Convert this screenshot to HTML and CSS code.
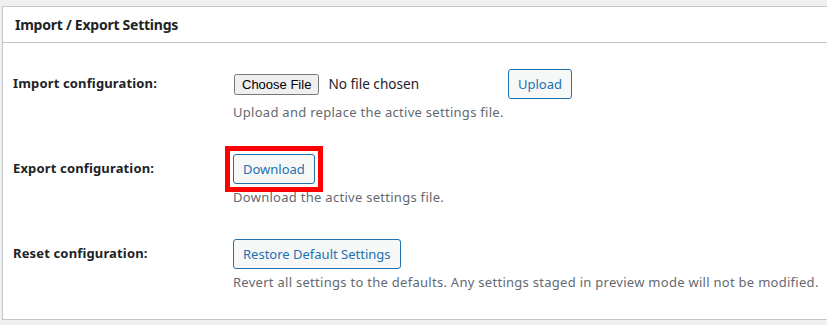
FILE: index.html
```html
<!DOCTYPE html>
<html lang="en">

<head>
    <meta charset="UTF-8">
    <meta name="viewport" content="width=device-width, initial-scale=1.0">
    <title>Import / Export Settings</title>
    <link rel="stylesheet" href="styles.css">
</head>

<body>
    <div class="panel">
        <h2 class="panel-title">Import / Export Settings</h2>

        <div class="panel-body">
            <!-- Import -->
            <div class="row">
                <div class="row-label">Import configuration:</div>
                <div class="row-field">
                    <div class="upload-line">
                        <input type="file" class="file-input">
                        <button class="btn">Upload</button>
                    </div>
                    <p class="desc">Upload and replace the active settings file.</p>
                </div>
            </div>

            <!-- Export -->
            <div class="row">
                <div class="row-label">Export configuration:</div>
                <div class="row-field">
                    <div>
                        <span class="marked"><button class="btn">Download</button></span>
                    </div>
                    <p class="desc">Download the active settings file.</p>
                </div>
            </div>

            <!-- Reset -->
            <div class="row">
                <div class="row-label">Reset configuration:</div>
                <div class="row-field">
                    <div>
                        <button class="btn">Restore Default Settings</button>
                    </div>
                    <p class="desc">Revert all settings to the defaults. Any settings staged in preview mode will not be modified.</p>
                </div>
            </div>
        </div>
    </div>
</body>

</html>
```

FILE: styles.css
```css
* {
    margin: 0;
    padding: 0;
    box-sizing: border-box;
}

body {
    font-family: 'Noto Sans', 'Open Sans', sans-serif;
    font-size: 13px;
    background-color: #f0f0f1;
    color: #1d2327;
    overflow: hidden;
}

.panel {
    margin: 6px -20px 0 2px;
    background-color: #fff;
    border: 1px solid #c3c4c7;
}

.panel-title {
    font-size: 14px;
    font-weight: 700;
    line-height: 35px;
    padding: 0 12px;
    letter-spacing: -0.25px;
    border-bottom: 1px solid #c3c4c7;
}

.panel-body {
    padding: 9px 10px 12px;
}

.row {
    display: flex;
    padding: 17px 0 16px;
}

.row-label {
    width: 220px;
    flex-shrink: 0;
    font-weight: 700;
    line-height: 28px;
    letter-spacing: 0.15px;
}

.upload-line {
    display: flex;
    align-items: center;
}

.file-input {
    width: 270px;
    margin-right: 4px;
    margin-left: 1px;
    font-family: inherit;
    font-size: 13.6px;
    color: #1d2327;
}

.file-input::file-selector-button {
    font-family: 'Liberation Sans', Arial, sans-serif;
    font-size: 13px;
    margin-right: 9px;
}

.btn {
    display: block;
    font-family: inherit;
    font-size: 13px;
    line-height: 28px;
    min-height: 30px;
    padding: 0 9px;
    color: #2271b1;
    background-color: #f6f7f7;
    border: 1px solid #2271b1;
    border-radius: 3px;
    cursor: pointer;
}

.btn:hover {
    background-color: #f0f0f1;
}

.marked {
    display: inline-block;
    vertical-align: top;
    outline: 5px solid #ff0000;
    outline-offset: 3px;
}

.desc {
    margin-top: 4px;
    line-height: 18px;
    letter-spacing: 0.28px;
    color: #646970;
}
```
